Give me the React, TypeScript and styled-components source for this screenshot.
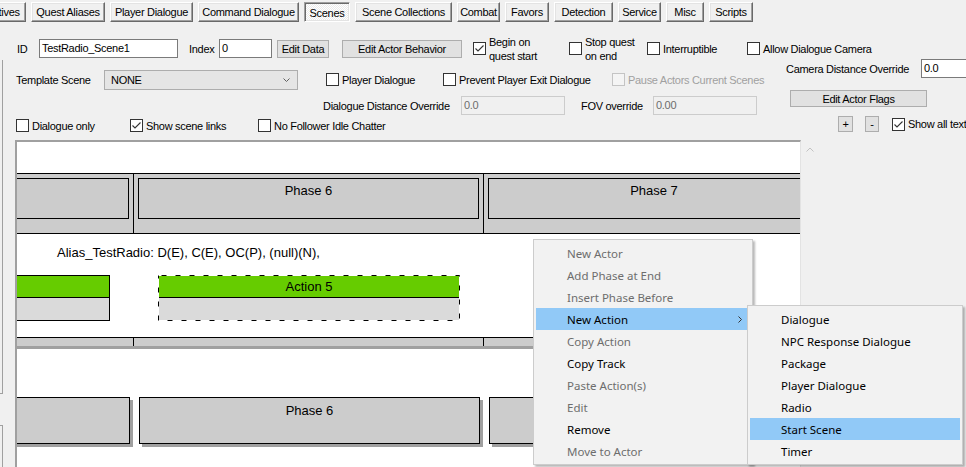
import React from 'react'
import styled, { createGlobalStyle, css } from 'styled-components'

const GlobalStyle = createGlobalStyle`
  html, body {
    margin: 0;
    padding: 0;
    background: #f0f0f0;
  }
  * {
    box-sizing: border-box;
  }
`

const tabs = [
  { label: 'Objectives', w: 61 },
  { label: 'Quest Aliases', w: 74 },
  { label: 'Player Dialogue', w: 83 },
  { label: 'Command Dialogue', w: 101 },
  { label: 'Scenes', w: 46, active: true },
  { label: 'Scene Collections', w: 97 },
  { label: 'Combat', w: 43 },
  { label: 'Favors', w: 44 },
  { label: 'Detection', w: 59 },
  { label: 'Service', w: 43 },
  { label: 'Misc', w: 38 },
  { label: 'Scripts', w: 44 },
]

const menuItems = [
  { label: 'New Actor', disabled: true },
  { label: 'Add Phase at End', disabled: true },
  { label: 'Insert Phase Before', disabled: true },
  { label: 'New Action', active: true, sub: true },
  { label: 'Copy Action', disabled: true },
  { label: 'Copy Track' },
  { label: 'Paste Action(s)', disabled: true },
  { label: 'Edit', disabled: true },
  { label: 'Remove' },
  { label: 'Move to Actor', disabled: true },
]

const actionTypes = ['Dialogue', 'NPC Response Dialogue', 'Package', 'Player Dialogue', 'Radio', 'Start Scene', 'Timer']

const Window = styled.div`
  position: relative;
  width: 966px;
  height: 467px;
  overflow: hidden;
  background: #f0f0f0;
  font-family: 'Liberation Sans', Arial, sans-serif;
  font-size: 11px;
  letter-spacing: -0.3px;
  color: #000;
`

const TabStrip = styled.div`
  display: flex;
  gap: 5px;
  height: 25px;
  padding-top: 2px;
  margin-left: -35px;
`

const Tab = styled.div<{ $w: number; $active?: boolean }>`
  flex: none;
  width: ${p => p.$w}px;
  height: 20px;
  line-height: 18px;
  text-align: center;
  white-space: nowrap;
  border: 1px solid;
  border-color: #fff #696969 #696969 #fff;
  box-shadow: inset -1px -1px 0 #a0a0a0, inset 1px 1px 0 #e3e3e3;
  background: #f0f0f0;
  ${p =>
    p.$active &&
    css`
      line-height: 20px;
      border-color: #a0a0a0 #fff #fff #a0a0a0;
      box-shadow: inset 1px 1px 0 #696969, inset -1px -1px 0 #e3e3e3;
      background: repeating-conic-gradient(#ffffff 0 25%, #ebebeb 0 50%) 0 0 / 2px 2px;
    `}
`

const Body = styled.div`
  display: flex;
  height: 442px;
`

const SidePane = styled.div`
  flex: none;
  width: 3px;
  display: flex;
  flex-direction: column;
`

const SideBox = styled.div<{ $upper?: boolean }>`
  width: 3px;
  border-right: 1px solid #a0a0a0;
  ${p =>
    p.$upper
      ? css`
          margin-top: 35px;
          height: 334px;
          border-bottom: 1px solid #a0a0a0;
        `
      : css`
          margin-top: 31px;
          flex: 1;
          border-top: 1px solid #a0a0a0;
        `}
`

const Main = styled.div`
  flex: 1;
  display: flex;
  flex-direction: column;
  min-width: 0;
`

const TopRow = styled.div`
  display: flex;
  align-items: flex-start;
  height: 34px;
`

const Settings = styled.div`
  display: flex;
  height: 81px;
`

const LeftCol = styled.div`
  flex: none;
  width: 780px;
  display: flex;
  flex-direction: column;
`

const RightCol = styled.div`
  flex: 1;
  display: flex;
  flex-direction: column;
`

const Row = styled.div<{ $h: number; $mt?: number }>`
  display: flex;
  align-items: center;
  height: ${p => p.$h}px;
  margin-top: ${p => p.$mt || 0}px;
`

const Label = styled.div<{ $w?: number; $ml?: number; $mt?: number }>`
  flex: none;
  ${p => p.$w && `width: ${p.$w}px;`}
  margin-left: ${p => p.$ml || 0}px;
  margin-top: ${p => p.$mt || 0}px;
  line-height: 20px;
  white-space: nowrap;
`

const Field = styled.div<{ $w: number; $ml?: number; $mt?: number; $disabled?: boolean }>`
  flex: none;
  width: ${p => p.$w}px;
  height: 19px;
  margin-left: ${p => p.$ml || 0}px;
  margin-top: ${p => p.$mt || 0}px;
  padding-left: 2px;
  line-height: 17px;
  background: #fff;
  border: 1px solid #7a7a7a;
  white-space: nowrap;
  overflow: hidden;
  ${p =>
    p.$disabled &&
    css`
      background: #f0f0f0;
      border-color: #cccccc;
      color: #6d6d6d;
    `}
`

const Button = styled.div<{ $w: number; $h?: number; $ml?: number; $mt?: number }>`
  flex: none;
  display: flex;
  align-items: center;
  justify-content: center;
  width: ${p => p.$w}px;
  height: ${p => p.$h || 18}px;
  margin-left: ${p => p.$ml || 0}px;
  margin-top: ${p => p.$mt || 0}px;
  background: #e1e1e1;
  border: 1px solid #adadad;
  white-space: nowrap;
`

const Select = styled.div<{ $w: number }>`
  flex: none;
  display: flex;
  align-items: center;
  justify-content: space-between;
  width: ${p => p.$w}px;
  height: 20px;
  padding: 0 7px 0 6px;
  background: #e5e5e5;
  border: 1px solid #adadad;
`

const CheckItem = styled.div<{ $w?: number; $ml?: number; $h?: number; $disabled?: boolean }>`
  flex: none;
  display: flex;
  align-items: center;
  gap: 3px;
  ${p => p.$w && `width: ${p.$w}px;`}
  ${p => p.$h && `height: ${p.$h}px;`}
  margin-left: ${p => p.$ml || 0}px;
  white-space: pre;
  color: ${p => (p.$disabled ? '#a0a0a0' : '#000')};
`

const Box = styled.span<{ $disabled?: boolean }>`
  flex: none;
  display: flex;
  align-items: center;
  justify-content: center;
  width: 13px;
  height: 13px;
  border: 1px solid ${p => (p.$disabled ? '#c4c4c4' : '#333')};
  background: ${p => (p.$disabled ? '#f4f4f4' : '#fff')};
`

const TwoLine = styled.span`
  line-height: 14px;
`

const TimelineRow = styled.div`
  display: flex;
  height: 327px;
  padding-left: 12px;
`

const Timeline = styled.div`
  flex: none;
  width: 786px;
  display: flex;
  flex-direction: column;
  overflow: hidden;
  background: #fff;
  border-top: 2px solid #a0a0a0;
  border-left: 2px solid #a0a0a0;
  border-right: 1px solid #e3e3e3;
  font-size: 13px;
  letter-spacing: 0;
`

const Gutter = styled.div`
  flex: none;
  width: 18px;
  display: flex;
  justify-content: center;
  padding-top: 7px;
`

const BlankStrip = styled.div`
  height: 31px;
`

const PhaseBand = styled.div<{ $h: number; $thick?: boolean }>`
  display: flex;
  height: ${p => p.$h + 1 + (p.$thick ? 3 : 1)}px;
  background: #cccccc;
  border-top: 1px solid #000;
  border-bottom: ${p => (p.$thick ? '3px solid #a0a0a0' : '1px solid #000')};
`

const PhaseCol = styled.div<{ $w?: number; $cut?: 'left' | 'right' }>`
  display: flex;
  padding: 4px 4px 0;
  ${p => (p.$w ? `flex: none; width: ${p.$w}px; border-right: 1px solid #000;` : 'flex: 1;')}
  ${p => p.$cut === 'left' && 'padding-left: 0;'}
  ${p => p.$cut === 'right' && 'padding-right: 0; margin-right: -20px;'}
`

const PhaseBox = styled.div<{ $cut?: 'left' | 'right' }>`
  flex: 1;
  height: 41px;
  padding-top: 4px;
  line-height: 15px;
  text-align: center;
  border: 1px solid #000;
  ${p => p.$cut === 'left' && 'margin-left: -3px;'}
`

const TrackArea = styled.div`
  height: 103px;
  padding-top: 11px;
`

const AliasText = styled.div`
  padding-left: 40px;
  line-height: 15px;
  white-space: nowrap;
`

const ActionRow = styled.div`
  display: flex;
  margin-top: 15px;
  height: 46px;
`

const Action = styled.div<{ $w: number; $ml?: number; $cut?: boolean }>`
  position: relative;
  flex: none;
  display: flex;
  flex-direction: column;
  width: ${p => p.$w}px;
  margin-left: ${p => p.$ml || 0}px;
  border: 1px solid ${p => (p.$cut ? '#000' : 'transparent')};
  ${p => p.$cut && 'border-left: none;'}
`

const ActionHead = styled.div`
  height: 22px;
  line-height: 21px;
  text-align: center;
  background: #66cc00;
  border-bottom: 1px solid #000;
`

const ActionBody = styled.div`
  flex: 1;
  background: #dadada;
`

const Selection = styled.svg`
  position: absolute;
  left: -1px;
  top: -1px;
  pointer-events: none;
`

const LowerPhases = styled.div`
  display: flex;
  gap: 9px;
  padding-top: 48px;
`

const ShadowBox = styled.div<{ $w: number; $ml?: number }>`
  flex: none;
  width: ${p => p.$w}px;
  height: 47px;
  margin-left: ${p => p.$ml || 0}px;
  padding-top: 5px;
  line-height: 15px;
  text-align: center;
  background: #cccccc;
  border: 1px solid #000;
  box-shadow: 3px 3px 0 #a0a0a0;
`

const Menu = styled.div<{ $left: number; $top: number; $w: number }>`
  position: absolute;
  left: ${p => p.$left}px;
  top: ${p => p.$top}px;
  width: ${p => p.$w}px;
  padding: 2px;
  background: #f2f2f2;
  border: 1px solid #cccccc;
  box-shadow: 2px 2px 2px rgba(0, 0, 0, 0.28);
  font-family: 'Noto Sans', 'Open Sans', sans-serif;
  font-size: 11.5px;
  letter-spacing: 0;
`

const MenuItem = styled.div<{ $disabled?: boolean; $active?: boolean }>`
  display: flex;
  align-items: center;
  justify-content: space-between;
  height: 22px;
  padding: 0 8px 0 31px;
  white-space: nowrap;
  color: ${p => (p.$disabled ? '#6d6d6d' : '#000')};
  background: ${p => (p.$active ? '#91c9f7' : 'transparent')};
`

const Check = () => (
  <svg width="11" height="11" viewBox="0 0 11 11">
    <path d="M1.5 5.5 L4 8 L9.5 2.5" fill="none" stroke="#333" strokeWidth="1.1" />
  </svg>
)

const CheckField = ({ label, checked = false, disabled = false, ...rest }) => (
  <CheckItem $disabled={disabled} {...rest}>
    <Box $disabled={disabled}>{checked && <Check />}</Box>
    {label.includes('\n') ? <TwoLine>{label}</TwoLine> : <span>{label}</span>}
  </CheckItem>
)

export default function App() {
  return (
    <>
      <GlobalStyle />
      <Window>
        <TabStrip>
          {tabs.map(t => (
            <Tab key={t.label} $w={t.w} $active={t.active}>
              {t.label}
            </Tab>
          ))}
        </TabStrip>

        <Body>
          <SidePane>
            <SideBox $upper />
            <SideBox />
          </SidePane>

          <Main>
            <TopRow>
              <Label $ml={14} $w={22} $mt={14}>ID</Label>
              <Field $w={139} $mt={14}>TestRadio_Scene1</Field>
              <Label $ml={11} $w={30} $mt={14}>Index</Label>
              <Field $w={53} $mt={14}>0</Field>
              <Button $w={52} $ml={5} $mt={15}>Edit Data</Button>
              <Button $w={120} $ml={13} $mt={15}>Edit Actor Behavior</Button>
              <CheckField label={'Begin on\nquest start'} checked $w={96} $ml={11} $h={47} />
              <CheckField label={'Stop quest\non end'} $w={78} $h={47} />
              <CheckField label="Interruptible" $w={100} $h={47} />
              <CheckField label="Allow Dialogue Camera" $h={47} />
            </TopRow>

            <Settings>
              <LeftCol>
                <Row $h={21} $mt={10}>
                  <Label $ml={13} $w={88}>Template Scene</Label>
                  <Select $w={194}>
                    <span>NONE</span>
                    <svg width="7" height="4" viewBox="0 0 7 4">
                      <polyline points="0.5,0.5 3.5,3.5 6.5,0.5" fill="none" stroke="#606060" />
                    </svg>
                  </Select>
                  <CheckField label="Player Dialogue" $w={117} $ml={28} />
                  <CheckField label="Prevent Player Exit Dialogue" $w={169} />
                  <CheckField label="Pause Actors Current Scenes" disabled />
                </Row>
                <Row $h={19} $mt={6}>
                  <Label $ml={320} $w={138}>Dialogue Distance Override</Label>
                  <Field $w={104} $disabled>0.0</Field>
                  <Label $ml={16} $w={72}>FOV override</Label>
                  <Field $w={104} $disabled>0.00</Field>
                </Row>
                <Row $h={17} $mt={2}>
                  <CheckField label="Dialogue only" $w={114} $ml={13} />
                  <CheckField label="Show scene links" checked $w={128} />
                  <CheckField label="No Follower Idle Chatter" />
                </Row>
              </LeftCol>

              <RightCol>
                <Row $h={19}>
                  <Label $ml={3} $w={135}>Camera Distance Override</Label>
                  <Field $w={60}>0.0</Field>
                </Row>
                <Button $w={137} $h={17} $ml={7} $mt={12}>Edit Actor Flags</Button>
                <Row $h={16} $mt={9}>
                  <Button $w={15} $h={16} $ml={55}>+</Button>
                  <Button $w={14} $h={16} $ml={12}>-</Button>
                  <CheckField label="Show all text" checked $ml={13} />
                </Row>
              </RightCol>
            </Settings>

            <TimelineRow>
              <Timeline>
                <BlankStrip />
                <PhaseBand $h={59}>
                  <PhaseCol $w={117} $cut="left">
                    <PhaseBox $cut="left" />
                  </PhaseCol>
                  <PhaseCol $w={350}>
                    <PhaseBox>Phase 6</PhaseBox>
                  </PhaseCol>
                  <PhaseCol $cut="right">
                    <PhaseBox>Phase 7</PhaseBox>
                  </PhaseCol>
                </PhaseBand>

                <TrackArea>
                  <AliasText>Alias_TestRadio: D(E), C(E), OC(P), (null)(N),</AliasText>
                  <ActionRow>
                    <Action $w={93} $cut>
                      <ActionHead />
                      <ActionBody />
                    </Action>
                    <Action $w={302} $ml={48}>
                      <ActionHead>Action 5</ActionHead>
                      <ActionBody />
                      <Selection width="302" height="46" viewBox="0 0 302 46">
                        <rect x="0.5" y="0.5" width="301" height="45" fill="none" stroke="#000" strokeDasharray="5 9" strokeDashoffset="-3" />
                      </Selection>
                    </Action>
                  </ActionRow>
                </TrackArea>

                <PhaseBand $h={8} $thick>
                  <PhaseCol $w={117} />
                  <PhaseCol $w={350} />
                  <PhaseCol />
                </PhaseBand>

                <LowerPhases>
                  <ShadowBox $w={121} $ml={-8} />
                  <ShadowBox $w={341}>Phase 6</ShadowBox>
                  <ShadowBox $w={400}>Phase 7</ShadowBox>
                </LowerPhases>
              </Timeline>
              <Gutter>
                <svg width="8" height="5" viewBox="0 0 8 5">
                  <polyline points="0.5,4.5 4,1 7.5,4.5" fill="none" stroke="#c2c2c2" />
                </svg>
              </Gutter>
            </TimelineRow>
          </Main>
        </Body>

        <Menu $left={533} $top={239} $w={220}>
          {menuItems.map(m => (
            <MenuItem key={m.label} $disabled={m.disabled} $active={m.active}>
              <span>{m.label}</span>
              {m.sub && (
                <svg width="4" height="7" viewBox="0 0 4 7">
                  <polyline points="0.5,0.5 3.5,3.5 0.5,6.5" fill="none" stroke="#333" />
                </svg>
              )}
            </MenuItem>
          ))}
        </Menu>

        <Menu $left={747} $top={305} $w={216}>
          {actionTypes.map(a => (
            <MenuItem key={a} $active={a === 'Start Scene'}>
              <span>{a}</span>
            </MenuItem>
          ))}
        </Menu>
      </Window>
    </>
  )
}
